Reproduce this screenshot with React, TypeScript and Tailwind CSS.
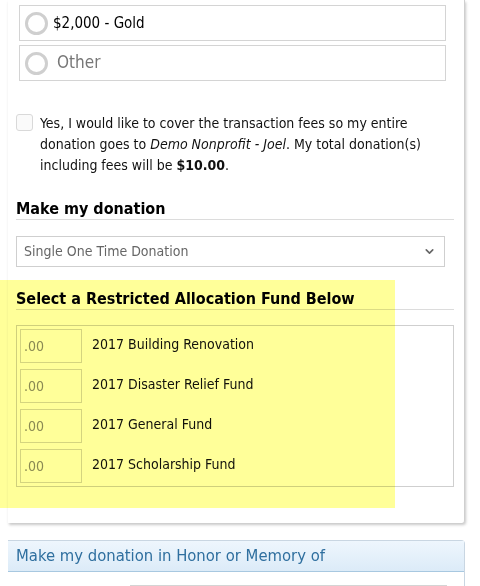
import { ChevronDown } from 'lucide-react';

const funds = ['2017 Building Renovation', '2017 Disaster Relief Fund', '2017 General Fund', '2017 Scholarship Fund'];

function Radio({ label, muted }: { label: string; muted?: boolean }) {
  return (
    <label className="flex h-[36px] w-[427px] items-center border border-[#d4d4d4] bg-white pl-[5px]">
      <span className="h-[23px] w-[23px] shrink-0 rounded-full border-[3px] border-[#cfcfcf] bg-white" />
      {muted ? (
        <span className="ml-[9px] text-[17px] text-[#777]">{label}</span>
      ) : (
        <span className="ml-[5px] text-[15px] text-black">{label}</span>
      )}
    </label>
  );
}

export default function App() {
  return (
    <div className="relative h-[586px] w-[480px] overflow-hidden bg-white font-['DejaVu_Sans',sans-serif] font-stretch-condensed text-[#111]">
      <section className="ml-[8px] h-[523px] w-[457px] rounded-br-[3px] border-r border-[#cfcfcf] bg-white pl-[8px] pt-[5px] shadow-[1px_2px_3px_rgba(0,0,0,0.22)]">
        <div className="flex flex-col gap-[4px] pl-[3px]">
          <Radio label="$2,000 - Gold" />
          <Radio label="Other" muted />
        </div>

        <div className="mt-[32px] flex items-start gap-[7px]">
          <span className="mt-[1px] h-[17px] w-[17px] shrink-0 rounded-[3px] border border-[#d9d9d9] bg-[#fafafa]" />
          <p className="text-[14px] leading-[21px] text-[#111]">
            Yes, I would like to cover the transaction fees so my entire
            <br />
            donation goes to <em>Demo Nonprofit - Joel</em>. My total donation(s)
            <br />
            including fees will be <strong>$10.00</strong>.
          </p>
        </div>

        <h3 className="mt-[23px] w-[438px] border-b border-[#dcdcdc] pb-[1px] text-[16px] font-bold leading-[19px] text-black">
          Make my donation
        </h3>

        <div className="mt-[16px] flex h-[31px] w-[429px] items-center justify-between border border-[#cfcfcf] bg-white pl-[7px] pr-[8px] text-[14px] text-[#666]">
          <span>Single One Time Donation</span>
          <ChevronDown size={13} strokeWidth={3} className="text-[#666]" />
        </div>

        <h3 className="mt-[22px] w-[438px] border-b border-[#dcdcdc] pb-[1px] text-[16px] font-bold leading-[19px] text-black">
          Select a Restricted Allocation Fund Below
        </h3>

        <div className="mt-[15px] flex w-[438px] flex-col gap-[6px] border border-[#cfcfcf] px-[3px] py-[3px]">
          {funds.map((fund) => (
            <div key={fund} className="flex items-start gap-[10px]">
              <div className="flex h-[34px] w-[62px] items-end border border-[#d4d4d4] bg-white pb-[5px] pl-[3px] text-[14px] text-[#8a8a8a]">
                .00
              </div>
              <span className="pt-[5px] text-[14px] text-[#111]">{fund}</span>
            </div>
          ))}
        </div>
      </section>

      <section className="ml-[8px] mt-[17px] w-[457px] rounded-tr-[4px] border border-l-0 border-[#c9d6e2]">
        <div className="flex h-[31px] items-center border-b border-[#a8c8e0] bg-[linear-gradient(180deg,#eef6fd,#dcebf8)] pl-[8px] text-[16.5px] text-[#2f6f9f]">
          Make my donation in Honor or Memory of
        </div>
        <div className="flex pt-[13px] pl-[122px]">
          <div className="h-[30px] w-[317px] border border-[#d4d4d4] bg-white" />
        </div>
      </section>

      <div className="pointer-events-none absolute left-0 top-[280px] h-[228px] w-[395px] bg-[#ffff99] mix-blend-multiply" />
    </div>
  );
}
